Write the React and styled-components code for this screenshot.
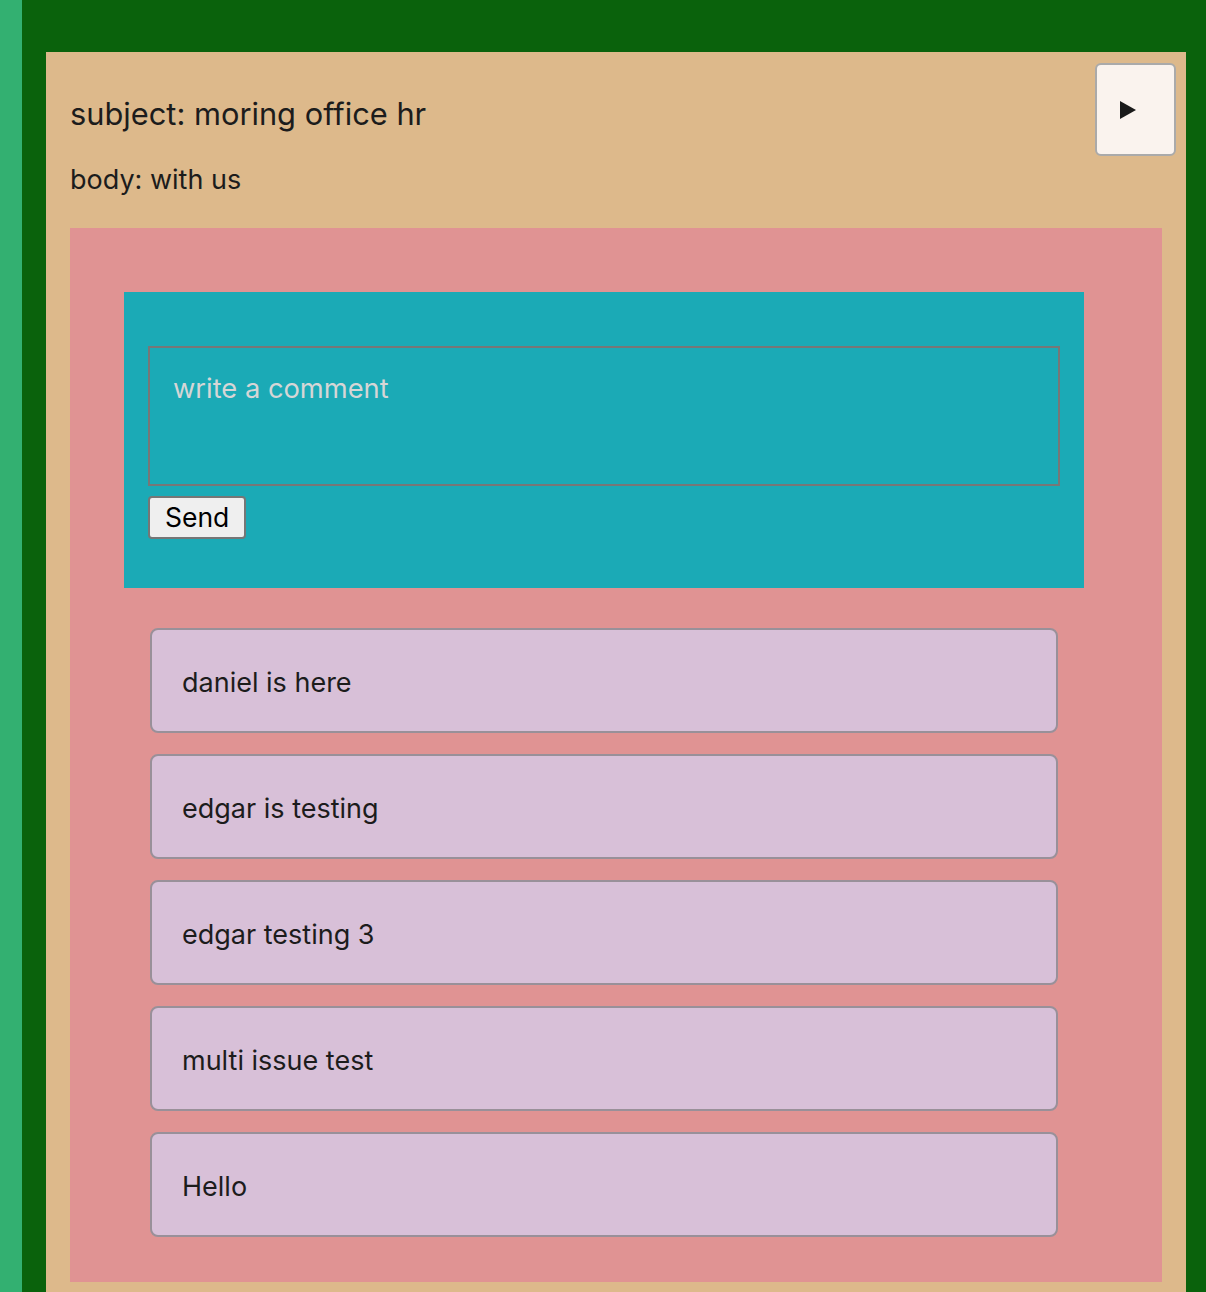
import React from "react";
import styled, { createGlobalStyle } from "styled-components";

const Global = createGlobalStyle`
  html, body { margin: 0; padding: 0; }
  body { background: #33b071; font-family: Inter, "Noto Sans", sans-serif; color: #1c1c1c; overflow: hidden; }
`;

const Outer = styled.div`
  margin-left: 22px;
  background: #0a620c;
  padding: 52px 20px 0 24px;
  min-height: 1292px;
  box-sizing: border-box;
`;

const Card = styled.div`
  position: relative;
  background: #ddb98b;
  padding: 24px 24px 10px 24px;
  min-height: 1240px;
  box-sizing: border-box;
`;

const Subject = styled.h2`
  margin: 0;
  padding-top: 18px;
  font-size: 30.8px;
  font-weight: 400;
  line-height: 40px;
`;

const Body = styled.p`
  margin: 28px 0 0 0;
  font-size: 27px;
  line-height: 36px;
`;

const PlayButton = styled.button`
  position: absolute;
  top: 11px;
  right: 10px;
  width: 81px;
  height: 93px;
  background: #faf3ee;
  border: 2px solid #aaaaaa;
  border-radius: 6px;
  display: flex;
  align-items: center;
  justify-content: flex-start;
  padding: 0 0 0 23px;
`;

const Panel = styled.div`
  margin-top: 30px;
  background: #e09393;
  padding: 64px 78px 45px 54px;
`;

const Composer = styled.div`
  background: #1baab6;
  padding: 54px 24px 49px 24px;
  display: flex;
  flex-direction: column;
  align-items: flex-start;
  gap: 10px;
`;

const TextArea = styled.textarea`
  width: 100%;
  height: 140px;
  box-sizing: border-box;
  background: transparent;
  border: 2px solid #777777;
  padding: 24px 23px;
  font-family: Inter, "Noto Sans", sans-serif;
  font-size: 27.3px;
  resize: none;
  outline: none;
  &::placeholder { color: #d6d6d6; }
`;

const SendButton = styled.button`
  font-family: Inter, "Noto Sans", sans-serif;
  font-size: 26.5px;
  color: #000;
  background: #efefef;
  border: 2px solid #767676;
  border-radius: 4px;
  padding: 3px 15px;
  height: 43px;
  line-height: 1;
`;

const List = styled.div`
  display: flex;
  flex-direction: column;
  gap: 21px;
  padding: 40px 26px 0 26px;
`;

const Comment = styled.div`
  height: 105px;
  box-sizing: border-box;
  background: #d8c0d8;
  border: 2px solid #999099;
  border-radius: 8px;
  padding: 4px 30px 0 30px;
  display: flex;
  align-items: center;
  font-size: 27px;
`;

const comments = ["daniel is here", "edgar is testing", "edgar testing 3", "multi issue test", "Hello"];

export default function App() {
  return (
    <>
      <Global />
      <Outer>
        <Card>
          <PlayButton aria-label="play">
            <svg width="16" height="18" viewBox="0 0 16 18"><path d="M0 0 L16 9 L0 18 Z" fill="#1a1a1a" /></svg>
          </PlayButton>
          <Subject>subject: moring office hr</Subject>
          <Body>body: with us</Body>
          <Panel>
            <Composer>
              <TextArea placeholder="write a comment" />
              <SendButton>Send</SendButton>
            </Composer>
            <List>
              {comments.map((c) => (
                <Comment key={c}>{c}</Comment>
              ))}
            </List>
          </Panel>
        </Card>
      </Outer>
    </>
  );
}
